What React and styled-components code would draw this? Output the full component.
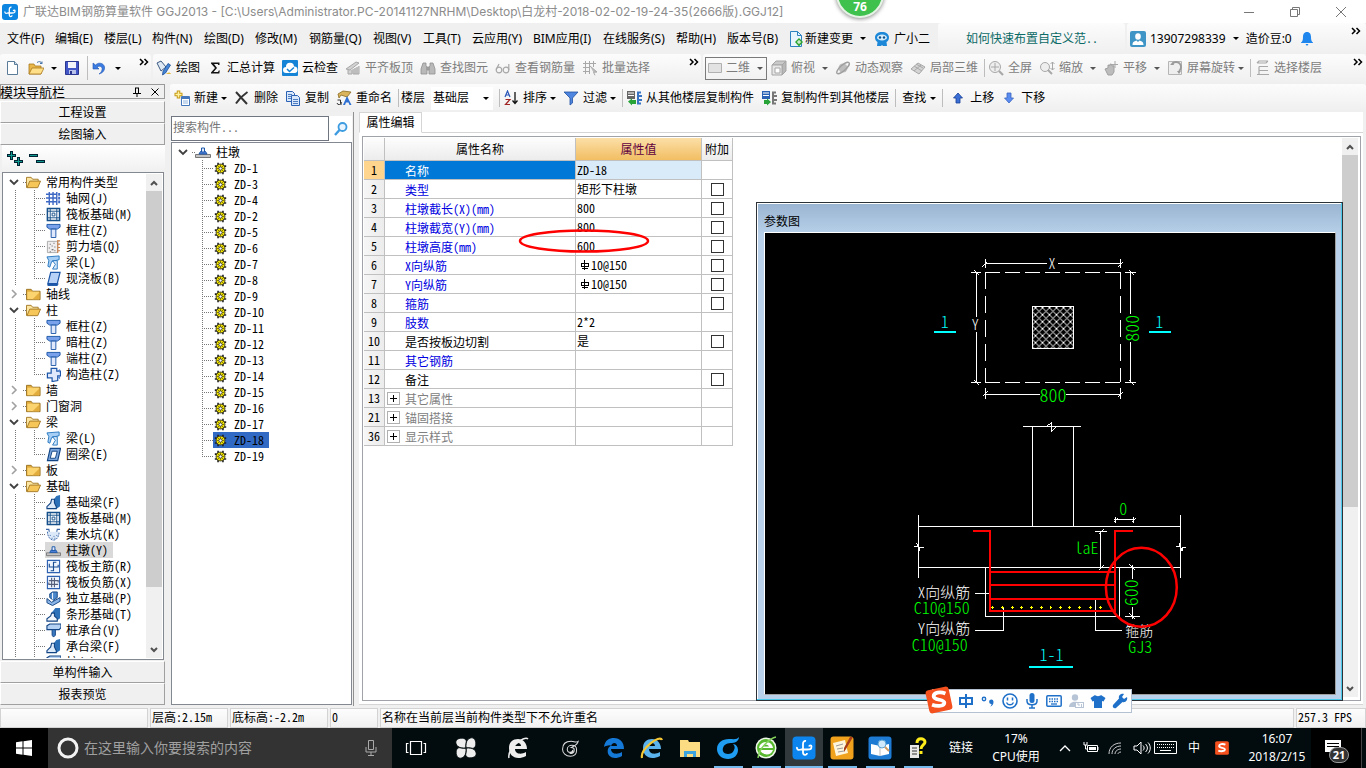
import React from 'react';
import styled, { createGlobalStyle, css } from 'styled-components';

const UI = '"Noto Sans", "Noto Sans CJK SC", sans-serif';
const SONG = '"Noto Sans CJK SC", "Noto Sans", sans-serif';

const Global = createGlobalStyle`
  *, *::before, *::after { box-sizing: border-box; }
  html, body { margin: 0; padding: 0; }
  body { font: 12px/16px ${UI}; color: #000; background: #f0f0f0; }
  button, input, select { font: inherit; color: inherit; margin: 0; padding: 0; border: 0; background: none; border-radius: 0; }
  ul { list-style: none; margin: 0; padding: 0; }
  h1, h2 { font: inherit; margin: 0; }
`;

const song = css`
  font-family: ${SONG};
  font-feature-settings: "hwid";
`;

/* ---------- icon drawings ---------- */

const G = '#a8a8a8';
const B = '#1c56a8';

const drawings = {
  newFile: <><path d="M3.500 1.500h7l3 3v10h-10z" fill="#fff" stroke="#5b7c99" /><path d="M10.500 1.500v3h3" fill="#cfe0ee" stroke="#5b7c99" /></>,
  open: <><path d="M1 14V4h5l1 2h6v8z" fill="#e9b64a" stroke="#a87a1e" strokeWidth=".8" /><path d="M1 14l3-6h12l-3 6z" fill="#ffdf88" stroke="#a87a1e" strokeWidth=".8" /><path d="M9 2.500c2-1.500 4-1 5 1m0-2v2h-2" fill="none" stroke="#4674a8" /></>,
  save: <><path d="M1.500 1.500h13v13h-13z" fill="#4256c8" stroke="#2b3690" /><path d="M4 2h8v6H4z" fill="#f3f5fb" /><path d="M5 10h7v4H5z" fill="#b9c3ea" /><path d="M6 11h2v3H6z" fill="#2b3690" /></>,
  undo: <path d="M2 3v6h6L6 7c3-2 6 0 5 3-.4 1.600-1.500 3-3 4 4-1 6-4 5.500-7C13 3.500 8 1.500 4.500 5z" fill="#3c7be0" stroke="#1e56b5" strokeWidth=".6" />,
  draw: <><path d="M1 3l4-2 5 6-5 4z" fill="#dfe9f4" stroke="#3b5a80" /><path d="M14.500 5l-5 8-3 2 .5-3.500 5-8z" fill="#4585d8" stroke="#1c4e93" strokeWidth=".8" /><path d="M10 14c2-2 4-2 5 0z" fill="#e5b93c" /></>,
  sigma: <path d="M4 2.500h8.500v2.500h-1.200l-.6-1H7l3 4-3.500 4h4.500l.8-1.500h1l-.5 3H4v-1l4-4.500-4-4.500z" fill="#111" />,
  cloud: <><rect width="16" height="16" rx="1" fill="#1583d6" /><path d="M4 13a3 3 0 010-6 4 4 0 018-.5A3.200 3.200 0 0112.500 13z" fill="#fff" /><path d="M5 9l2.500 2.500L12 7.500" fill="none" stroke="#1583d6" strokeWidth="1.500" /></>,
  alignTop: <g fill="#d2d2d2" stroke={G}><path d="M1 9l10-7 3 1-9 7zM3 10v4h4v-4M8 9v5h6V6" /><path d="M10 8v6M12 7v7" /></g>,
  binoc: <g fill="#b9b9b9" stroke="#8f8f8f" strokeWidth=".8"><path d="M3 3h3v3l1 1v7H1V9zM10 3h3l2 6v5H9V7l1-1zM7 7h2v3H7z" /></g>,
  glasses: <g fill="none" stroke={G} strokeWidth="1.200"><circle cx="4" cy="10" r="2.800" /><circle cx="11" cy="10" r="2.800" /><path d="M1.200 9.500L4 4M13.800 10V4" /></g>,
  batch: <g fill="none" stroke={G}><path d="M1 3.500h13M1 7.500h7M1 11.500h7M3.500 1v13M7.500 1v13M11.500 1v6" /><path d="M8 6l7 6-3.500.3 1.500 3" fill="#bbb" /></g>,
  flat: <path d="M1.500 3.500h13v9h-13z" fill="#e2e2e2" stroke="#b0b0b0" />,
  cube: <g stroke="#a5a5a5" fill="#e6e6e6"><path d="M1 5l4-4h10l-4 4z" fill="#c9c9c9" /><path d="M15 1v10l-4 4V5z" fill="#b8b8b8" /><path d="M1 5h10v10H1z" /><path d="M4 8h5v5H4z" fill="#fff" /></g>,
  orbit: <><circle cx="8" cy="8" r="4.500" fill="#bdbdbd" /><ellipse cx="8" cy="8" rx="8" ry="2.800" fill="none" stroke="#9f9f9f" strokeWidth="1.400" transform="rotate(-42 8 8)" /></>,
  local3d: <g fill="#d4d4d4" stroke={G}><path d="M1 9l7-6 7 4-6 7z" /><path d="M4 6l8 5M6 4l7 4M11 5l-7 6" /></g>,
  full: <g fill="none" stroke={G}><circle cx="7" cy="7" r="5.500" fill="#eee" /><path d="M7 3v8M3 7h8" /><path d="M11 11l4 4" strokeWidth="2.200" /></g>,
  zoomer: <g fill="none" stroke={G}><circle cx="6" cy="7" r="4.500" fill="#eee" /><path d="M9 10l4 4" strokeWidth="2" /><path d="M13.500 2v8M11.500 4l2-2 2 2M11.500 8l2 2 2-2" /></g>,
  hand: <><path d="M2 9l3-1V5l2 .5V4l2 .5V6l2-.2V12l-2 3H5z" fill="#bcbcbc" stroke="#a0a0a0" /><path d="M12 1v7M9 4.500h6" stroke={G} /></>,
  rotate: <><path d="M1.500 1.500h13v13h-13z" fill="#eee" stroke="#b5b5b5" /><path d="M5 4a5 5 0 117 7" fill="none" stroke="#9a9a9a" strokeWidth="1.800" /><path d="M3 5l4 0-1-3zM14 11l-4 0 2 3z" fill="#999" /></>,
  floor: <g stroke={G} fill="none"><path d="M3 3l2-2h9M3 3h9l2-2M5 6.500h9M5 10.500h9M3 14.500h12M5 6.500v8" strokeWidth="1.200" /></g>,
  create: <><path d="M4.500 0.500v8M.5 4.500h8" stroke="#c79a17" strokeWidth="3.500" /><path d="M4.500 1.500v6M1.500 4.500h6" stroke="#fff2a0" strokeWidth="1.500" /><path d="M7.500 6.500h8v9h-8z" fill="#fff" stroke="#4476bb" /><path d="M8 7h7v2H8z" fill="#4476bb" /><path d="M9 11h5M9 13h5" stroke="#8fb3df" /></>,
  del: <path d="M2 2l11 12M13.500 2C9 5 5 9 2 13.500" stroke="#333" strokeWidth="2" fill="none" />,
  copy: <g stroke="#2c62b4" fill="#d8e7fa"><path d="M1.500 1.500h6l2 2v8h-8z" /><path d="M3 4.500h4M3 6.500h3M3 8.500h3" strokeWidth=".8" /><path d="M6.500 5.500h6l2 2v8h-8z" /><path d="M8 9.500h5M8 11.500h5M8 13.500h5" strokeWidth=".8" /></g>,
  rename: <><path d="M2 4l5-3 8 1-4 5-6-2-2 3z" fill="#d9b45c" stroke="#8a6a20" strokeWidth=".8" /><path d="M7 15l4-9 4.500 9h-2l-1-2.500h-2.500l-1 2.500z" fill="#2d6fd2" /><path d="M1 13a2 2 0 104-1v3M1.500 10h3v3" stroke="#333" fill="none" /></>,
  sort: <><path d="M2 7l2.500-6L7 7M3 5h3" stroke="#2855b8" fill="none" strokeWidth="1.200" /><path d="M2.500 9.500H7l-4.500 5H7" stroke="#a02525" fill="none" strokeWidth="1.200" /><path d="M12 2v11M9.500 10.500l2.500 3 2.500-3" stroke="#111" fill="none" strokeWidth="1.300" /></>,
  filter: <path d="M1 2h14l-5.500 6v5L7 15V8z" fill="#4d85e0" stroke="#23529f" strokeWidth=".8" />,
  fromFloor: <><path d="M1 1h8v8H1z" fill="#666" /><path d="M2 3h6M2 5.500h6" stroke="#fff" /><path d="M15 2.500h-3v11h3M12 6h4M12 10h4" stroke="#3973c4" fill="none" strokeWidth="2" /><path d="M2 11.500l4-3V10h4v4H6v1.500z" fill="#27a338" /></>,
  toFloor: <><path d="M1 1h8v8H1z" fill="#2c62b4" /><path d="M2 3h6M2 5.500h6" stroke="#fff" /><path d="M15 2.500h-3v11h3M12 6h4M12 10h4" stroke="#777" fill="none" strokeWidth="2" /><path d="M10 12L6 8.500V10H3v4h3v1.500z" fill="#27a338" /></>,
  up: <path d="M8 3l4.500 5H10v5H6V8H3.500z" fill="#3b6fd6" stroke="#173f95" strokeWidth=".8" />,
  down: <path d="M8 13l4.500-5H10V3H6v5H3.500z" fill="#5b8cf0" stroke="#3a66c0" strokeWidth=".8" />,
  change: <><path d="M2.500.5h7l4 4v11h-11z" fill="#e9f4fd" stroke="#2f82c0" /><path d="M9.500.5v4h4" fill="none" stroke="#2f82c0" /><path d="M11 7l4 4-4 4.500L7 11z" fill="#2fa52f" /><path d="M11 9v4M9 11h4" stroke="#fff" /></>,
  robot: <><path d="M8 1c4 0 7 2 7 5.500 0 2-1 3.500-2.500 4.500l.5 4H9l-1-1-1 1H3l.5-4C2 10 1 8.500 1 6.500 1 3 4 1 8 1z" fill="#1d88d8" /><ellipse cx="8" cy="6.500" rx="5" ry="3" fill="#d5ecfb" /><circle cx="6" cy="6.500" r="1.200" fill="#12548b" /><circle cx="10" cy="6.500" r="1.200" fill="#12548b" /></>,
  user: <><rect width="16" height="16" rx="2" fill="#3f95c6" /><ellipse cx="8" cy="5.500" rx="2.800" ry="3.300" fill="#fff" /><path d="M2.500 14c0-4 2.500-3.500 4-4.500L8 11l1.500-1.500c1.500 1 4 .5 4 4.500z" fill="#fff" /></>,
  bell: <path d="M8 1c3 0 4 2.500 4 5 0 3 .5 4.500 2 5.500v.5H2v-.5C3.500 10.500 4 9 4 6c0-2.500 1-5 4-5zM6.500 13h3L8 15z" fill="#1f86ee" />,
  find: <><circle cx="9.500" cy="6" r="4" fill="#e8f4ff" stroke="#3d9be0" strokeWidth="1.800" /><path d="M6.500 9L2 14" stroke="#3d9be0" strokeWidth="2.400" /></>,
  app: <><rect width="16" height="16" rx="3" fill="#0c86e0" /><path d="M9.500 3.200C8 3 7.300 4 7.300 5.500V11c0 2 2.700 2 2.700.3M3 7.500c-.4 2 1 2.200 2.700 1.500H10c2 0 3 0 3-2 0-1-1.400-1-1.700 0" fill="none" stroke="#fff" strokeWidth="1.300" /></>,
  folder: <><path d="M.5 13.500v-11h5l1.500 2h8v9z" fill="#e3ad3e" stroke="#9a7322" /><path d="M1.500 5h12.500v8H1.500z" fill="#fbd36f" /><path d="M7 13l7-7v7z" fill="#e3ad3e" /></>,
  folderOpen: <><path d="M.5 13.500v-11h5l1.500 2h6v3" fill="#fce6a2" stroke="#a37a28" /><path d="M1 13.500l3-7h11.500l-3 7z" fill="#f6c659" stroke="#a37a28" /></>,
  grid: <><path d="M0 3.500h11M0 7.500h11M0 11.500h11M3.500 1v14M7.500 1v14M11.500 1v14" stroke="#3d68c4" strokeWidth="1.500" /><path d="M13 2h2v3h-2zM13 6h2v3h-2zM13 10h2v3h-2z" fill="#3d68c4" /></>,
  raft: <g fill="none" stroke="#16508a"><path d="M1.500 1.500h13v13h-13z" strokeWidth="1.600" /><path d="M4.500 1v14M11.500 1v14M1 4.500h14M1 11.500h14" /><path d="M6.500 6.500h3v3h-3z" /></g>,
  column: <><path d="M1 1.500h14v3l-3 2H4L1 4.500z" fill="#7aa2ea" stroke={B} /><path d="M5.500 6.500h5v9h-5z" fill="#dfe9fb" stroke={B} /></>,
  wall: <><path d="M1.500 2.500h11v12h-11z" fill="#f0eeee" stroke="#aaa" /><path d="M4 5h1v1H4zM8 4h1v1H8zM6 7h1v1H6zM3 9h1v1H3zM9 8h1v1H9zM6 11h2v1H6zM4 13h1v1H4zM9 12h1v1H9z" fill="#555" /><path d="M12.500 1v14M12 2h3M12 5.500h3M12 9h3M12 12.500h3" stroke="#c8834e" strokeWidth="1.200" /></>,
  beam: <><path d="M1 2l13-1v4l-8 2-2 6-2-1 1-6z" fill="#a7cff6" stroke="#2877bf" /><path d="M7 6l5 0v9H7l3-5z" fill="#d6e9fb" stroke="#2877bf" /></>,
  slab: <><path d="M5 1.500h10l-3 12H2z" fill="#b8d2f7" stroke={B} strokeWidth="1.300" /><path d="M2 13.500v2h10l1-2" fill={B} stroke={B} /></>,
  ring: <><path d="M4.500 1.500h11l-3 13h-11z" fill="#7aa5dd" stroke="#134483" strokeWidth="1.200" /><path d="M6.500 4.500h5.500l-2 7.500H4.500z" fill="#fff" stroke="#134483" /></>,
  tooth: <><path d="M5.500 1.500h6v3h4v5h-3v5l-6 1v-4h-5v-5h4z" fill="#dfe9fb" stroke={B} strokeWidth="1.300" /><path d="M12 4l3-2v4zM12 11l3-2v4z" fill="#5887cf" /></>,
  foundBeam: <><path d="M8 5l3-4 4-1v12l-4 3z" fill="#2d71b8" /><path d="M1 14.500v-2l4-4 1-4h3v4l2 4v2z" fill="#dce9f8" stroke="#134483" strokeWidth="1.200" /></>,
  pit: <g fill="none" stroke="#3d68a8"><path d="M0 2.500h3l1 5h7l1-5h3" strokeWidth="1.200" /><path d="M1.500 5c0 5 3 9 6.500 9s6-4 6-9" fill="#dce9f8" strokeDasharray="2 1" /><path d="M4 9h1M8 10h1M11 9h1M6 12h1M9 12h1" /></g>,
  pier: <><path d="M.5 10.500h15v3H.5z" fill="#c4c4c4" stroke="#777" /><path d="M4 10l1.500-2.500h5L12 10z" fill="#4f82dc" stroke={B} /><path d="M6.500 4h3v4h-3z" fill="#dfe9fb" stroke={B} /></>,
  mainBar: <g fill="none" stroke="#2e62b0"><path d="M1.500 1.500h13v13h-13z" fill="#edf4fd" strokeWidth="1.200" /><path d="M8 3v10M8 3.500h3M8 12.500H5M3.500 5v3.500H13V6" stroke="#174b91" strokeWidth="1.200" /></g>,
  negBar: <g fill="none" stroke="#2e62b0"><path d="M1.500 1.500h13v13h-13z" fill="#edf4fd" strokeWidth="1.200" /><path d="M6 3v10M9 3v10M3 6h10v2M3 8v2h10" stroke="#555f7a" strokeWidth="1.200" /></g>,
  indep: <><path d="M1 8l5 4 9-5v4l-8 4.500-6-3z" fill="#8bb5e6" stroke="#134483" /><path d="M4 3l3-2h5v6l-4 3-4-3z" fill="#4b87cb" stroke="#134483" /><path d="M7 2v7" stroke="#fff" /></>,
  strip: <><path d="M6 6l4-5h5v11l-4 3z" fill="#2d71b8" /><path d="M1 15v-2.500l4-3 1-3h3v3l3 3V15z" fill="#f2f7fd" stroke="#134483" strokeWidth="1.200" /></>,
  pile: <><path d="M1 3l3-2h12v4l-2 2H1z" fill="#b5d1f3" stroke="#134483" strokeWidth="1.200" /><path d="M6.500 7h3.500v6l-2 2-1.500-2z" fill="#3a78c0" stroke="#134483" /></>,
  gear: <><path d="M5 1v14M11 1v14M1 5h14M1 11h14" stroke="#222" strokeWidth="2" /><circle cx="8" cy="8" r="5.500" fill="#f3e600" stroke="#222" /><path d="M8 3v10M3 8h10M4.500 4.500l7 7M11.500 4.500l-7 7" stroke="#4b4600" strokeWidth=".8" /><circle cx="8" cy="8" r="2" fill="#fff" stroke="#333" /></>,
};

const Svg = styled.svg`
  flex: none;
  display: block;
  width: ${p => p.$s || 16}px;
  height: ${p => p.$s || 16}px;
`;
const Icon = ({ name, size }) => <Svg viewBox="0 0 16 16" $s={size} aria-hidden="true">{drawings[name]}</Svg>;

/* ---------- page ---------- */

const Page = styled.div`
  display: flex;
  flex-direction: column;
  min-height: 100vh;
  position: relative;
  overflow: hidden;
`;

const TitleBar = styled.header`
  display: flex;
  align-items: center;
  height: 23px;
  padding: 0 2px;
  background: #fff;
  color: #8c8c8c;
  h1 { flex: 1; margin-left: 5px; font-family: Inter, "Noto Sans CJK SC", sans-serif; white-space: nowrap; }
`;
const WinButton = styled.button`
  width: 46px;
  height: 23px;
  display: grid;
  place-items: center;
`;
const Bubble = styled.div`
  position: absolute;
  top: -30px;
  left: 836px;
  width: 48px;
  height: 48px;
  padding-top: 27px;
  border-radius: 50%;
  border: 2px solid #e4f3e4;
  background: #3fc14e;
  box-shadow: 0 1px 4px #888;
  color: #fff;
  font-weight: 700;
  text-align: center;
`;

const Row = styled.div`
  display: flex;
  height: ${p => p.$h}px;
  gap: 2px;
`;
const barFill = css`
  background: linear-gradient(#fcfcfc, #efefef);
  border-radius: 3px;
`;
const MenuBar = styled.nav`
  display: flex;
  align-items: center;
  width: 936px;
  padding-left: 7px;
  white-space: nowrap;
`;
const MenuItem = styled.button`
  flex: none;
  display: flex;
  align-items: center;
  gap: 1px;
  width: ${p => p.$w}px;
  text-align: left;
  white-space: nowrap;
`;
const Tip = styled.a`
  ${barFill}
  ${song}
  width: 187px;
  padding: 7px 0 0 28px;
  color: #0b6a66;
  text-decoration: none;
  white-space: nowrap;
`;
const Account = styled.div`
  ${barFill}
  flex: 1;
  display: flex;
  align-items: center;
  gap: 4px;
  padding: 0 3px;
  white-space: nowrap;
`;

const Group = styled.div`
  ${barFill}
  display: flex;
  align-items: center;
  gap: 6px;
  padding: ${p => p.$pad || '0 2px'};
  ${p => (p.$w ? `width: ${p.$w}px;` : 'flex: 1;')}
  min-width: 0;
`;
const Tool = styled.button`
  flex: none;
  display: flex;
  align-items: center;
  gap: 3px;
  height: 24px;
  color: ${p => (p.$off ? '#7d7d7d' : '#000')};
  white-space: nowrap;
  > svg:first-child { margin: 0 1px; }
`;
const Divider = styled.i`
  flex: none;
  width: 1px;
  height: ${p => p.$h || 18}px;
  margin-right: ${p => (p.$wide ? 0 : -4)}px;
  background: #bdbdbd;
`;
const MoreMark = styled.button`
  margin-left: auto;
  align-self: flex-start;
  margin-top: 2px;
  width: 12px;
  height: 12px;
`;
const Caret = styled.i`
  flex: none;
  width: 0;
  margin: 0 0 0 ${p => p.$m ?? 6}px;
  border: 3px solid transparent;
  border-top-color: ${p => (p.$off ? '#555' : '#000')};
  border-bottom: 0;
`;
const MoreSvg = styled.svg`
  display: block;
`;
const More = () => (
  <MoreMark aria-label="更多">
    <MoreSvg width="10" height="8" viewBox="0 0 10 8"><path d="M1 1l3 3-3 3M5.500 1l3 3-3 3" fill="none" stroke="#000" strokeWidth="1.500" /></MoreSvg>
  </MoreMark>
);
const Combo = styled.label`
  flex: none;
  display: flex;
  align-items: center;
  width: 62px;
  height: 23px;
  margin-right: ${p => (p.$line ? -3 : 0)}px;
  padding: 0 1px;
  border: 1px solid ${p => (p.$line ? '#7a7a7a' : '#fff')};
  background: ${p => (p.$line ? 'transparent' : '#fff')};
  color: ${p => (p.$line ? '#7d7d7d' : '#000')};
  select { appearance: none; flex: 1; min-width: 0; outline: 0; margin-left: ${p => (p.$line ? 3 : 0)}px; }
  ${Caret} { margin: 0 2px 0 3px; }
`;

const Body = styled.main`
  flex: 1;
  display: flex;
  min-height: 0;
  gap: 5px;
`;

/* ---------- module navigator ---------- */

const Nav = styled.aside`
  ${song}
  width: 165px;
  display: flex;
  flex-direction: column;
  padding-bottom: 1px;
`;
const NavTitle = styled.div`
  display: flex;
  align-items: center;
  height: 15px;
  margin-bottom: 1px;
  border: 1px solid #9a9a9a;
  h2 { flex: 1; font-size: 13px; line-height: 12px; margin-left: -1px; white-space: nowrap; }
  button { width: 18px; height: 13px; display: grid; place-items: center; }
`;
const NavButton = styled.button`
  flex: none;
  height: 22px;
  margin-top: ${p => (p.$gap ? 1 : 0)}px;
  border: 1px solid #fff;
  border-right-color: #a0a0a0;
  border-bottom: 1px solid #a0a0a0;
  background: #f0f0f0;
  text-align: center;
`;
const NavTools = styled.div`
  display: flex;
  align-items: center;
  gap: 6px;
  height: 27px;
  padding: 0 5px;
  margin: 0 0 0 2px;
  background: linear-gradient(#fff, #f0f0f0);
  button { display: block; height: 16px; }
`;
const TreeBox = styled.div`
  flex: 1 1 0;
  display: flex;
  min-height: 0;
  overflow: hidden;
  margin: 0 1px 0 ${p => (p.$nav ? 2 : 0)}px;
  padding: 1px;
  border: 1px solid #848890;
  background: #fff;
  > ul { flex: 1; height: 100%; overflow: hidden; min-width: 0; }
`;
const TreeRow = styled.li`
  display: flex;
  align-items: center;
  height: 16px;
  padding-left: ${p => p.$pad || 0}px;
  white-space: nowrap;
`;
const dots = (dir, size) => `repeating-linear-gradient(${dir}, #777 0 1px, transparent 1px 2px) ${size}`;
const Twist = styled.button`
  flex: none;
  width: 18px;
  height: 16px;
  display: grid;
  place-items: center;
`;
const Stub = styled.i`
  flex: none;
  width: 3px;
  height: 1px;
  background: ${dots('to right', '0 0')};
`;
const Trunk = styled.i`
  flex: none;
  width: 19px;
  height: 16px;
  background: ${dots('to bottom', '0 0 / 1px 100% no-repeat')};
`;
const Elbow = styled.i`
  flex: none;
  width: 11px;
  height: 16px;
  background:
    ${p => dots('to bottom', `0 0 / 1px ${p.$last ? '50%' : '100%'} no-repeat`)},
    ${dots('to right', '0 8px / 100% 1px no-repeat')};
`;
const Leaf = styled.span`
  display: flex;
  align-items: center;
  gap: ${p => p.$gap || 5}px;
  height: 16px;
  padding: 0 5px 0 ${p => (p.$root ? 0 : 1)}px;
  background: ${p => p.$bg || 'none'};
`;
const Twisty = ({ open }) => (
  <Twist aria-label={open ? '收起' : '展开'}>
    <svg width="10" height="10" viewBox="0 0 10 10">
      {open
        ? <path d="M1 3l4 4 4-4" fill="none" stroke="#404040" strokeWidth="1.800" />
        : <path d="M3 1l4 4-4 4" fill="none" stroke="#a0a0a0" strokeWidth="1.600" />}
    </svg>
  </Twist>
);

const Scroll = styled.div`
  flex: none;
  display: flex;
  flex-direction: column;
  width: 16px;
  background: #f0f0f0;
  i { flex: ${p => p.$thumb} 1 0; background: #cdcdcd; }
  span { flex: ${p => 100 - p.$thumb} 1 0; }
  button { height: 17px; width: 16px; display: grid; place-items: center; }
`;
const Scrollbar = ({ thumb }) => (
  <Scroll $thumb={thumb}>
    <button aria-label="向上滚动"><svg width="8" height="6"><path d="M1 5l3-3 3 3" fill="none" stroke="#505050" strokeWidth="2" /></svg></button>
    <i /><span />
    <button aria-label="向下滚动"><svg width="8" height="6"><path d="M1 1l3 3 3-3" fill="none" stroke="#505050" strokeWidth="2" /></svg></button>
  </Scroll>
);

const modules = [
  ['常用构件类型', [['轴网(J)', 'grid'], ['筏板基础(M)', 'raft'], ['框柱(Z)', 'column'], ['剪力墙(Q)', 'wall'], ['梁(L)', 'beam'], ['现浇板(B)', 'slab']]],
  ['轴线'],
  ['柱', [['框柱(Z)', 'column'], ['暗柱(Z)', 'column'], ['端柱(Z)', 'column'], ['构造柱(Z)', 'tooth']]],
  ['墙'],
  ['门窗洞'],
  ['梁', [['梁(L)', 'beam'], ['圈梁(E)', 'ring']]],
  ['板'],
  ['基础', [['基础梁(F)', 'foundBeam'], ['筏板基础(M)', 'raft'], ['集水坑(K)', 'pit'], ['柱墩(Y)', 'pier'], ['筏板主筋(R)', 'mainBar'], ['筏板负筋(X)', 'negBar'], ['独立基础(P)', 'indep'], ['条形基础(T)', 'strip'], ['桩承台(V)', 'pile'], ['承台梁(F)', 'foundBeam'], ['桩(U)', 'pile']]],
];

const Navigator = () => (
  <Nav>
    <NavTitle>
      <h2>模块导航栏</h2>
      <button aria-label="固定"><svg width="8" height="10"><path d="M2 1h4M2.500 1v5M5.500 1v5M0 6.500h8M4 6v4" stroke="#000" fill="none" /></svg></button>
      <button aria-label="关闭"><svg width="8" height="8"><path d="M.5.5l7 7M7.500.5l-7 7" stroke="#000" /></svg></button>
    </NavTitle>
    <NavButton $gap>工程设置</NavButton>
    <NavButton>绘图输入</NavButton>
    <NavTools>
      <button aria-label="全部展开"><svg width="16" height="16"><path d="M4.500 0v9M0 4.500h9M11.500 6v9M7 10.500h9" stroke="#023" strokeWidth="3" /><path d="M4.500 1v7M1 4.500h7M11.500 7v7M8 10.500h7" stroke="#119a8e" /></svg></button>
      <button aria-label="全部收起"><svg width="16" height="16"><path d="M0 4.500h9M7 10.500h9" stroke="#023" strokeWidth="3" /><path d="M1 4.500h7M8 10.500h7" stroke="#119a8e" /></svg></button>
    </NavTools>
    <TreeBox $nav>
      <ul>
        {modules.map(([name, kids], i) => (
          <React.Fragment key={i}>
            <TreeRow $pad={1}>
              <Twisty open={!!kids} />
              <Stub />
              <Leaf $root><Icon name={kids ? 'folderOpen' : 'folder'} size={15} />{name}</Leaf>
            </TreeRow>
            {kids && kids.map(([label, icon], k) => (
              <TreeRow key={k} $pad={11}>
                <Trunk /><Elbow $last={k === kids.length - 1} />
                <Leaf $bg={label === '柱墩(Y)' && '#d9d9d9'}><Icon name={icon} size={15} />{label}</Leaf>
              </TreeRow>
            ))}
          </React.Fragment>
        ))}
      </ul>
      <Scrollbar thumb={88} />
    </TreeBox>
    <NavButton $gap>单构件输入</NavButton>
    <NavButton>报表预览</NavButton>
  </Nav>
);

/* ---------- component list ---------- */

const Work = styled.section`
  flex: 1;
  min-width: 0;
  display: flex;
  flex-direction: column;
`;
const Panes = styled.div`
  flex: 1;
  display: flex;
  min-height: 0;
  gap: 5px;
`;
const ListPane = styled.div`
  ${song}
  display: flex;
  flex-direction: column;
  width: 184px;
  padding: 4px 0 1px 1px;
  border-right: 1px solid #909090;
`;
const SearchRow = styled.div`
  display: flex;
  height: 26px;
  margin-right: 1px;
  background: #fff;
  input {
    width: 158px;
    height: 25px;
    padding: 0 1px 4px;
    border: 1px solid #707680;
    background: #fff;
    outline: 0;
  }
  input::placeholder { color: #777; opacity: 1; }
  button { flex: 1; display: grid; place-items: center; }
`;
const pieces = [1, 3, 4, 2, 5, 6, 7, 8, 9, 10, 11, 12, 13, 14, 15, 16, 17, 18, 19];

const ComponentList = () => (
  <ListPane>
    <SearchRow>
      <input aria-label="搜索构件" placeholder="搜索构件..." />
      <button aria-label="搜索"><Icon name="find" /></button>
    </SearchRow>
    <TreeBox>
      <ul>
        <TreeRow $pad={1}><Twisty open /><Stub /><Leaf $root><Icon name="pier" />柱墩</Leaf></TreeRow>
        {pieces.map(n => (
          <TreeRow key={n} $pad={29}>
            <Elbow $last={n === 19} />
            <Leaf $gap={7} $bg={n === 18 && '#316ac5'}><Icon name="gear" size={13} />ZD-{n}</Leaf>
          </TreeRow>
        ))}
      </ul>
    </TreeBox>
  </ListPane>
);

/* ---------- property editor ---------- */

const Editor = styled.div`
  ${song}
  flex: 1;
  min-width: 0;
  display: flex;
  flex-direction: column;
  margin-right: 3px;
  padding-bottom: 1px;
`;
const Tabs = styled.div`
  display: flex;
  height: 21px;
  background: #fff;
  border-bottom: 1px solid #d5d5d5;
  button { width: 63px; height: 21px; padding-bottom: 2px; border: 1px solid #d5d5d5; border-bottom-color: #fff; background: #fff; }
`;
const Sheet = styled.div`
  flex: 1;
  display: flex;
  padding: 3px 2px 3px 3px;
  background: #fff;
  border-bottom: 1px solid #d5d5d5;
`;
const SheetInner = styled.div`
  position: relative;
  flex: 1;
  display: flex;
  justify-content: space-between;
  align-items: stretch;
  padding: 1px 2px 3px 1px;
  border: 1px solid #a0a3a8;
`;
const Grid = styled.table`
  border-collapse: separate;
  border-spacing: 0;
  table-layout: fixed;
  width: 369px;
  align-self: flex-start;
  th, td { height: 19px; padding: 0; border: solid #c0c0c0; border-width: 0 1px 1px 0; font-weight: 400; line-height: 18px; white-space: nowrap; }
  thead th { height: 23px; background: linear-gradient(#fdfdfd, #ececec); }
  thead th:nth-child(3) { background: linear-gradient(#fbdfa8, #f2be62); color: #600040; }
  tbody th { background: linear-gradient(90deg, #f6f6f6, #ececec); text-align: center; }
  tbody tr:first-child th { background: #ffd58d; }
  td:nth-child(3) { padding-left: 1px; }
  td:nth-child(4) { text-align: center; }
  tbody tr:first-child td:nth-child(2) { background: #0078d7; color: #fff; }
  tbody tr:first-child td:nth-child(3) { background: #d9eaf9; }
`;
const Name = styled.div`
  display: flex;
  align-items: center;
  gap: 5px;
  height: 18px;
  padding: 1px 0 0 ${p => (p.$group ? 2 : 20)}px;
  color: ${p => p.$c};
`;
const Plus = styled.button`
  width: 13px;
  height: 13px;
  border: 1px solid #b0b0b0;
  background: linear-gradient(#000, #000) center / 7px 1px no-repeat, linear-gradient(#000, #000) center / 1px 7px no-repeat;
`;
const Check = styled.input`
  appearance: none;
  display: block;
  width: 13px;
  height: 13px;
  margin: 0 auto;
  border: 1px solid #333;
  background: #fff;
`;
const Value = styled.span`
  display: flex;
  align-items: center;
  gap: 1px;
  padding-left: ${p => (p.$bar ? 3 : 0)}px;
`;
const Steel = () => (
  <svg width="10" height="10" viewBox="0 0 10 10" role="img" aria-label="三级钢"><path d="M1 3.500h8M1 6.500h8M4.500 0v10M1.500 3v4M8.500 3v4M2 8.500h6" stroke="#000" fill="none" shapeRendering="crispEdges" /></svg>
);

const BLUE = '#0000e0';
const rows = [
  [1, '名称', '#fff', 'ZD-18', 0],
  [2, '类型', BLUE, '矩形下柱墩', 1],
  [3, '柱墩截长(X)(mm)', BLUE, '800', 1],
  [4, '柱墩截宽(Y)(mm)', BLUE, '800', 1],
  [5, '柱墩高度(mm)', BLUE, '600', 1],
  [6, 'X向纵筋', BLUE, '10@150', 1, 'bar'],
  [7, 'Y向纵筋', BLUE, '10@150', 1, 'bar'],
  [8, '箍筋', BLUE, '', 1],
  [9, '肢数', BLUE, '2*2', 0],
  [10, '是否按板边切割', '#000', '是', 1],
  [11, '其它钢筋', BLUE, '', 0],
  [12, '备注', '#000', '', 1],
  [13, '其它属性', '#808080', '', 0, 'group'],
  [21, '锚固搭接', '#808080', '', 0, 'group'],
  [36, '显示样式', '#808080', '', 0, 'group'],
];

const PropertyGrid = () => (
  <Grid>
    <colgroup><col width="21" /><col width="191" /><col width="126" /><col width="31" /></colgroup>
    <thead><tr><th /><th>属性名称</th><th>属性值</th><th>附加</th></tr></thead>
    <tbody>
      {rows.map(([n, name, color, value, tick, kind]) => (
        <tr key={n}>
          <th scope="row">{n}</th>
          <td><Name $c={color} $group={kind === 'group'}>{kind === 'group' && <Plus aria-label={`展开${name}`} />}{name}</Name></td>
          <td><Value $bar={kind === 'bar'}>{kind === 'bar' && <Steel />}{value}</Value></td>
          <td>{tick ? <Check type="checkbox" aria-label={`附加 ${name}`} /> : null}</td>
        </tr>
      ))}
    </tbody>
  </Grid>
);

const Mark = styled.svg`
  position: absolute;
  left: 155px;
  top: 91px;
  width: 132px;
  height: 26px;
  pointer-events: none;
`;

const ParamWindow = styled.section`
  position: absolute;
  top: 65px;
  right: 17px;
  bottom: -1px;
  left: 393px;
  display: flex;
  flex-direction: column;
  padding: 0 6px 5px 7px;
  border: 1px solid #2c3138;
  box-shadow: inset -1px -1px #4bc9ea, inset 1px 1px #fff;
  background: linear-gradient(#99b4d1, #b9d1ea 32px);
  h2 { flex: none; height: 29px; padding: 10px 0 0; line-height: 16px; }
`;
const Canvas = styled.svg`
  flex: 1;
  min-height: 0;
  width: 100%;
  display: block;
  background: #000;
  border: 1px solid #fff;
  border-right-color: #a0a0a0;
  border-bottom-color: #a0a0a0;
  font-family: ${SONG};
`;

const barDots = [992, 1002, 1012, 1021, 1031, 1041, 1051, 1061, 1070, 1080, 1091, 1101];

const Diagram = () => (
  <Canvas viewBox="765 234 571 460" preserveAspectRatio="xMidYMid meet" role="img" aria-label="柱墩参数图">
    <defs>
      <pattern id="hatch" width="7" height="7" patternUnits="userSpaceOnUse">
        <path d="M0 0l7 7M7 0L0 7" stroke="#fff" strokeWidth="1" />
      </pattern>
    </defs>
    <g fill="none" stroke="#fff" shapeRendering="crispEdges">
      <path d="M985.500 272.500H1121.500M985.500 382.500H1121.500" strokeDasharray="15 5" />
      <path d="M985.500 272.500V382.500M1121.500 272.500V382.500" strokeDasharray="17 7" />
      <rect x="1032.500" y="306.500" width="42" height="42" fill="url(#hatch)" />
      <path d="M985.500 263.500H1047M1059 263.500H1121.500M985.500 259v9M1121.500 259v9M985.500 394.500H1040M1067 394.500H1121.500M985.500 388v11M1121.500 388v11" />
      <path d="M976.500 272.500V317M976.500 332V382.500M971 272.500h10M971 382.500h10M1131.500 272.500V314M1131.500 342V382.500M1126 272.500h11M1126 382.500h11" />
      <path d="M983 267l5-5M1119 267l5-5M983 397l5-5M1119 397l5-5M974 270l5 5M974 380l5 5M1129 270l5 5M1129 380l5 5" />
      <path d="M1023 426.500h59M1032.500 426.500V527M1074.500 426.500V527M1046 427l6-5v10l5-5" />
      <path d="M918 527.500h264M918 568.500h264M918.500 516v63M1181.500 516v63M914 547h4l-1-3 3 8 0-4h4M1177 547h4l-1-3 3 8 0-4h4" />
      <path d="M985.500 568.500v49h135v-49" />
      <path d="M1101.500 532.500V568M1096 532.500h12M1099 535l5-5M1099 571l5-5M1115 520.500h20M1116.500 518v6M1134.500 518v6M1114 523l4-4M1132 523l4-4" />
      <path d="M1133.500 566V580M1133.500 608V620M1126 617.500h15M1130 565l6 6M1130 614l6 6" />
      <path d="M975 594.500h15M975 631.500h28.500V609M1096.500 601v30.500H1123" />
    </g>
    <g fill="none" stroke="#f00" strokeWidth="2" shapeRendering="crispEdges">
      <path d="M973 532h17v80h126v-80h18M990 573h126M990 586h126M990 600h126" />
    </g>
    <path d={barDots.map(x => `M${x - 1} 608.500h3M${x + 0.5} 607v3`).join('')} stroke="#ff0" shapeRendering="crispEdges" />
    <path d="M934 332h22M1150 332h22M1029 668h45" stroke="#0ff" strokeWidth="2" shapeRendering="crispEdges" />
    <g fill="#fff" fontSize="14" fontWeight="300" style={{ fontFeatureSettings: '"hwid"' }}>
      <text x="1049" y="269">X</text>
      <text x="972" y="330">Y</text>
      <text x="918" y="599" fontSize="15">X向纵筋</text>
      <text x="918" y="635" fontSize="15">Y向纵筋</text>
      <text x="1126" y="637">箍筋</text>
    </g>
    <g fill="#0f0" fontSize="16" fontWeight="300" style={{ fontFeatureSettings: '"hwid"' }}>
      <text x="1040" y="402" fontSize="18">800</text>
      <text fontSize="18" transform="translate(1140 342) rotate(-90)">800</text>
      <text fontSize="18" transform="translate(1139 607) rotate(-90)">600</text>
      <text x="1075" y="555">laE</text>
      <text x="1120" y="516">0</text>
      <text x="914" y="615">C10@150</text>
      <text x="912" y="652">C10@150</text>
      <text x="1129" y="654">GJ3</text>
    </g>
    <g fill="#0ff" fontSize="16" fontWeight="300" style={{ fontFeatureSettings: '"hwid"' }}>
      <text x="941" y="328">1</text>
      <text x="1156" y="328">1</text>
      <text x="1040" y="662">1-1</text>
    </g>
    <ellipse cx="1142" cy="588" rx="35.500" ry="39.500" fill="none" stroke="#f00" strokeWidth="2.500" />
  </Canvas>
);

/* ---------- status bar ---------- */

const Status = styled.footer`
  ${song}
  flex: none;
  display: flex;
  gap: 2px;
  height: 22px;
  padding: 2px 0 0;
  div {
    flex: none;
    height: 20px;
    padding: 0 1px;
    border: 1px solid #d3d3d3;
    background: linear-gradient(#fdfdfd, #f1f1f1);
    white-space: nowrap;
  }
`;
const Cell = styled.div`
  width: ${p => p.$w}px;
`;
const WideCell = styled.div`
  &&& { flex: 1; }
`;

/* ---------- input method bar ---------- */

const Ime = styled.div`
  position: absolute;
  right: 234px;
  bottom: 55px;
  display: flex;
  align-items: center;
  gap: 6px;
  height: 24px;
  padding: 0 3px 0 25px;
  border: 1px solid #b3c1d3;
  background: #fff;
  color: #1f70c8;
  button { width: 16px; height: 16px; display: block; }
`;
const ImeLogo = styled.svg`
  position: absolute;
  left: -9px;
  top: -5px;
  width: 30px;
  height: 30px;
`;
const imeIcons = [
  ['中文', <path d="M2 5h12v6H2zM8 1v14" fill="none" stroke="currentColor" strokeWidth="2" />],
  ['标点', <><circle cx="4" cy="6" r="1.700" fill="none" stroke="currentColor" strokeWidth="1.400" /><path d="M13.500 8.500a2.200 2.200 0 10-2 2.500c0 1-.5 2-1.500 2.500 2.500-.3 3.700-2.500 3.500-5z" fill="currentColor" /></>],
  ['表情', <><circle cx="8" cy="8" r="7" fill="none" stroke="currentColor" strokeWidth="1.600" /><path d="M5.500 4.500v3M10.500 4.500v3M4.500 9.500c1.500 3 5.500 3 7 0" fill="none" stroke="currentColor" strokeWidth="1.500" /></>],
  ['语音', <><rect x="5.500" y="0" width="5" height="10" rx="2.500" fill="currentColor" /><path d="M3 6v2c0 5 10 5 10 0V6M8 12v3M5 15h6" fill="none" stroke="currentColor" strokeWidth="1.500" /></>],
  ['软键盘', <><rect x=".8" y="2.800" width="14.400" height="10.400" rx="1" fill="none" stroke="currentColor" strokeWidth="1.500" /><path d="M3 6h10M3 8.500h10" stroke="currentColor" strokeWidth="1.500" strokeDasharray="1.500 1" /><path d="M5 11h6" stroke="currentColor" strokeWidth="1.300" /></>],
  ['登录', <><circle cx="7" cy="4.500" r="3.200" fill="#b7c4d6" /><path d="M1 14c0-7 12-7 12 0z" fill="#b7c4d6" /><rect x="7.500" y="9.500" width="8" height="5" fill="#fff" stroke="#b7c4d6" /><path d="M9 11h2v2M13.500 11v3" stroke="#b7c4d6" fill="none" /></>],
  ['皮肤', <path d="M5 2c1 1.500 5 1.500 6 0l4.500 3-2 3.500L12 8v7H4V8l-1.500.5-2-3.500z" fill="currentColor" />],
  ['工具', <path d="M15 4l-3 2-2-2 2-3c-3-1-6 1.500-5 4.500L1 12c-1 2 1 4 3 3l6.500-6C13.500 10 16 7 15 4z" fill="currentColor" />],
];

/* ---------- taskbar ---------- */

const Taskbar = styled.footer`
  flex: none;
  display: flex;
  height: 40px;
  background: #020b0e;
  color: #fff;
  white-space: nowrap;
`;
const Start = styled.button`
  width: 48px;
  display: grid;
  place-items: center;
  background: #000;
`;
const Cortana = styled.label`
  display: flex;
  align-items: center;
  gap: 5px;
  width: 344px;
  padding: 0 11px 0 9px;
  background: #333;
  input { flex: 1; min-width: 0; font-size: 14px; outline: 0; }
  input::placeholder { color: #a0a0a0; opacity: 1; }
`;
const TaskButton = styled.button`
  flex: none;
  width: ${p => p.$w || 38}px;
  display: grid;
  place-items: center;
  background:
    linear-gradient(#76b9ed, #76b9ed) center bottom / ${p => (p.$on ? 38 : p.$run ? 29 : 0)}px 2px no-repeat,
    ${p => (p.$on ? '#32393c' : 'transparent')};
`;
const Tray = styled.div`
  flex: 1;
  display: flex;
  align-items: center;
  min-width: 0;
`;
const TrayItem = styled.div`
  flex: none;
  display: grid;
  place-items: center;
  width: ${p => p.$w}px;
  line-height: 18px;
  text-align: center;
`;
const Notice = styled.div`
  position: relative;
  margin-left: auto;
  width: 55px;
  height: 40px;
  padding: 12px 0 0 14px;
  background: #000;
  box-shadow: inset -4px 0 #020b0e, inset -5px 0 #444;
  span {
    position: absolute;
    left: 18px;
    top: 19px;
    width: 20px;
    height: 16px;
    border: 1px solid #999;
    border-radius: 8px;
    background: #333;
    font: 700 11px/14px ${UI};
    text-align: center;
  }
`;

const Task = ({ label, children, ...p }) => (
  <TaskButton aria-label={label} {...p}><Svg viewBox="0 0 24 24" $s={24}>{children}</Svg></TaskButton>
);
const eShape = 'M3 12c0-6 4-9 9-9 5 0 9 4 9 10H9c0 5 6 6 11 3v4C10 25 3 20 3 12zM9 10h6c0-4-6-4-6 0z';
const swirl = 'M22 3c-3 2-5 0-9 0C6 3 2 7 2 13c0 5 4 9 10 9 5 0 8-3 8-8 0-4-3-6-6-6s-6 2-6 5 2 4 4 4 3-1 3-3c1 2-1 5-4 4 4 2 6-1 6-4 0-2-2-3-4-3 3-2 8-3 9-8z';

const menus = [['文件(F)', 48], ['编辑(E)', 49], ['楼层(L)', 48], ['构件(N)', 52], ['绘图(D)', 51], ['修改(M)', 54], ['钢筋量(Q)', 64], ['视图(V)', 50], ['工具(T)', 49], ['云应用(Y)', 61], ['BIM应用(I)', 70], ['在线服务(S)', 73], ['帮助(H)', 51], ['版本号(B)', 61]];

export default function App() {
  return (
    <Page>
      <Global />
      <TitleBar>
        <Icon name="app" />
        <h1>广联达BIM钢筋算量软件 GGJ2013 - [C:\Users\Administrator.PC-20141127NRHM\Desktop\白龙村-2018-02-02-19-24-35(2666版).GGJ12]</h1>
        <WinButton aria-label="最小化"><svg width="10" height="10"><path d="M0 5.500h10" stroke="#777" /></svg></WinButton>
        <WinButton aria-label="还原"><svg width="10" height="10"><path d="M.5 2.500h7v7h-7zM2.500 2.500v-2h7v7h-2" fill="none" stroke="#777" /></svg></WinButton>
        <WinButton aria-label="关闭"><svg width="10" height="10"><path d="M0 0l10 10M10 0L0 10" stroke="#777" /></svg></WinButton>
      </TitleBar>
      <Bubble>76</Bubble>

      <Row $h={31}>
        <MenuBar>
          {menus.map(([t, w]) => <MenuItem key={t} $w={w}>{t}</MenuItem>)}
          <MenuItem $w={86}><Icon name="change" />新建变更<Caret /></MenuItem>
          <MenuItem $w={60}><Icon name="robot" />&nbsp;广小二</MenuItem>
        </MenuBar>
        <Tip href="#">如何快速布置自定义范..</Tip>
        <Account>
          <Icon name="user" />13907298339<Caret $m={3} />&nbsp;造价豆:0&nbsp;<Icon name="bell" />
          <More />
        </Account>
      </Row>

      <Row $h={30}>
        <Group $w={151} $pad="0 0 2px 3px">
          <Tool aria-label="新建工程"><Icon name="newFile" /></Tool>
          <Tool aria-label="打开"><Icon name="open" /><Caret $m={3} /></Tool>
          <Tool aria-label="保存"><Icon name="save" /></Tool>
          <Divider $h={24} />
          <Tool aria-label="撤销"><Icon name="undo" /><Caret $m={4} /></Tool>
          <More />
        </Group>
        <Group $w={548} $pad="0 0 2px 2px">
          <Tool><Icon name="draw" />绘图</Tool>
          <Tool><Icon name="sigma" />汇总计算</Tool>
          <Tool><Icon name="cloud" />云检查</Tool>
          <Tool $off><Icon name="alignTop" />平齐板顶</Tool>
          <Tool $off><Icon name="binoc" />查找图元</Tool>
          <Tool $off><Icon name="glasses" />查看钢筋量</Tool>
          <Tool $off><Icon name="batch" />批量选择</Tool>
          <More />
        </Group>
        <Group $pad="0 1px 2px 2px">
          <Combo $line><Icon name="flat" /><select aria-label="视图维度"><option>二维</option></select><Caret $off /></Combo>
          <Tool $off><Icon name="cube" />俯视<Caret $off $m={4} /></Tool>
          <Tool $off><Icon name="orbit" />动态观察</Tool>
          <Tool $off><Icon name="local3d" />局部三维</Tool>
          <Divider />
          <Tool $off><Icon name="full" />全屏</Tool>
          <Tool $off><Icon name="zoomer" />缩放<Caret $off $m={4} /></Tool>
          <Tool $off><Icon name="hand" />平移<Caret $off $m={4} /></Tool>
          <Tool $off><Icon name="rotate" />屏幕旋转<Caret $off $m={0} /></Tool>
          <Divider />
          <Tool $off><Icon name="floor" />选择楼层</Tool>
          <More />
        </Group>
      </Row>

      <Body>
        <Navigator />
        <Work>
          <Row $h={28}>
            <Group $pad="0 0 0 3px">
              <Tool><Icon name="create" />新建<Caret $m={0} /></Tool>
              <Tool><Icon name="del" />删除</Tool>
              <Tool><Icon name="copy" />复制</Tool>
              <Tool><Icon name="rename" />重命名</Tool>
              <Divider />
              <span>楼层</span>
              <Combo><select aria-label="楼层"><option>基础层</option></select><Caret /></Combo>
              <Divider />
              <Tool><Icon name="sort" />排序<Caret $m={0} /></Tool>
              <Tool><Icon name="filter" />过滤<Caret $m={0} /></Tool>
              <Divider />
              <Tool><Icon name="fromFloor" />从其他楼层复制构件</Tool>
              <Tool><Icon name="toFloor" />复制构件到其他楼层</Tool>
              <Divider $wide />
              <Tool>查找<Caret $m={1} /></Tool>
              <Divider $wide />
              <Tool><Icon name="up" />上移</Tool>
              <Tool><Icon name="down" />下移</Tool>
            </Group>
          </Row>
          <Panes>
            <ComponentList />
            <Editor>
              <Tabs role="tablist"><button role="tab" aria-selected="true">属性编辑</button></Tabs>
              <Sheet>
                <SheetInner>
                  <PropertyGrid />
                  <Scrollbar thumb={67} />
                  <Mark viewBox="0 0 132 26"><ellipse cx="66" cy="13" rx="64" ry="10.500" fill="none" stroke="#f00" strokeWidth="2.500" /></Mark>
                  <ParamWindow>
                    <h2>参数图</h2>
                    <Diagram />
                  </ParamWindow>
                </SheetInner>
              </Sheet>
            </Editor>
          </Panes>
        </Work>
      </Body>

      <Status>
        <Cell $w={148} />
        <Cell $w={78}>层高:2.15m</Cell>
        <Cell $w={98}>底标高:-2.2m</Cell>
        <Cell $w={48}>0</Cell>
        <WideCell>名称在当前层当前构件类型下不允许重名</WideCell>
        <Cell $w={70}>257.3 FPS</Cell>
      </Status>

      <Ime>
        <ImeLogo viewBox="0 0 28 28"><rect x="3" y="3" width="22" height="22" rx="3" fill="#f4511e" transform="rotate(-12 14 14)" /><path d="M20 8c-5-2-11-1-11 2.500 0 4 10 2.500 10 6 0 3-6 4-11.500 2" fill="none" stroke="#fff" strokeWidth="3.500" /></ImeLogo>
        {imeIcons.map(([label, d]) => <button key={label} aria-label={label}><Svg viewBox="0 0 16 16">{d}</Svg></button>)}
      </Ime>

      <Taskbar>
        <Start aria-label="开始"><svg width="16" height="16" viewBox="0 0 16 16"><path d="M0 2.200l6.500-.9v6.200H0zM7.500 1.200L16 0v7.500H7.500zM0 8.500h6.500v6.200L0 13.800zM7.500 8.500H16V16l-8.500-1.200z" fill="#fff" /></svg></Start>
        <Cortana>
          <svg width="22" height="22"><circle cx="11" cy="11" r="9" fill="none" stroke="#f2f2f2" strokeWidth="3" /></svg>
          <input aria-label="搜索" placeholder="在这里输入你要搜索的内容" />
          <svg width="20" height="20" viewBox="0 0 20 20"><path d="M7.500 2.500h5v9h-5zM5 9v5h10V9M10 14v3M7 17.500h6" fill="none" stroke="#aaa" /></svg>
        </Cortana>
        <Task label="任务视图" $w={48}><path d="M6.500 5.500h11v13h-11zM4.500 7.500h-2v9h2M19.500 7.500h2v9h-2" fill="none" stroke="#fff" strokeWidth="1.200" /></Task>
        <Task label="四叶草" $w={52}><g fill="#eee" stroke="#020b0e" strokeWidth=".8"><path d="M12 12C5 13 1 9 2 5c1-3 8-4 10-1 1 2-1 5 0 8zM12 12c-1-7 3-11 7-10 3 1 4 8 1 10-2 1-5-1-8 0zM12 12c7-1 11 3 10 7-1 3-8 4-10 1-1-2 1-5 0-8zM12 12c1 7-3 11-7 10-3-1-4-8-1-10 2-1 5 1 8 0z" /></g></Task>
        <Task label="浏览器" $w={52}><path d={eShape} fill="#eee" /><path d="M22 3C18-1 1 13 3 22" fill="none" stroke="#eee" strokeWidth="1.500" /></Task>
        <Task label="广联达" $w={51}><path d={swirl} fill="none" stroke="#ddd" strokeWidth="1.300" transform="translate(3 3) scale(.78)" /></Task>
        <Task label="Edge"><path d="M2 11C3 4 7 2 12 2c6 0 10 4 10 11H9c0 5 6 6 11 3v4C11 25 4 20 6 13c.6-2 2-3 4-4-4 0-7 1-8 2zM9 10h6c0-4-5-4-6 0z" fill="#1579d8" /></Task>
        <Task label="Internet Explorer"><path d={eShape} fill="#5bb3ee" /><path d="M22 4C20-2 0 13 2 22" fill="none" stroke="#f3c736" strokeWidth="2.200" /></Task>
        <Task label="文件资源管理器"><path d="M2 4h8l1 2h11v15H2z" fill="#fbdc83" /><path d="M6 21v-6h12v6h-3v-3H9v3z" fill="#3da4e0" /></Task>
        <Task label="广联达服务" $run><path d="M23 1c-2 3-6 2-10 2C6 3 1 7 1 13c0 6 5 10 11 10 6 0 10-4 10-9 0-3-2-6-5-6 2 2 2 4 1 6-1 3-4 4-6 4-4 0-6-3-5-6 1-4 5-5 9-5s7-3 7-6z" fill="#1f9df2" /></Task>
        <Task label="360浏览器" $run><circle cx="12" cy="12" r="10.500" fill="#eef8e8" /><circle cx="12" cy="12" r="9" fill="#57b82f" /><path d="M5 12c1-8 13-8 14 0zM6 14h13c-2 6-10 6-13 0z" fill="#fff" /><path d="M9 10.500h6c-1-2.500-5-2.500-6 0z" fill="#57b82f" /><path d="M22 1C17 2 5 11 4 22" fill="none" stroke="#83d35a" strokeWidth="1.500" /></Task>
        <Task label="广联达钢筋算量" $run $on><rect x=".5" y=".5" width="23" height="23" rx="4" fill="#0c86ee" /><path d="M14 5c-2-.3-3 1-3 3v8.500c0 3 4 3 4 .5M5 11c-.6 3 1.500 3.300 4 2.500h6c3 0 4.500 0 4.500-3 0-1.500-2-1.500-2.500 0" fill="none" stroke="#fff" strokeWidth="1.800" /></Task>
        <Task label="便签" $run><rect x=".5" y=".5" width="23" height="23" rx="3" fill="#f0a21c" /><path d="M3 7l12-3 3 13-12 3z" fill="#fff5dc" /><path d="M6 10l7-2M7 13l6-1M8 16l6-1" stroke="#999" /><path d="M23 1l-7 12-2 3v-4l6-11z" fill="#a63c18" /></Task>
        <Task label="阅读" $run><rect x=".5" y=".5" width="23" height="23" rx="3" fill="#1d7bd4" /><path d="M3 8l9 2 9-2v10l-9 2-9-2z" fill="#fff" /><path d="M12 10v10" stroke="#bbb" /><circle cx="14" cy="8" r="4" fill="#cfe9fb" stroke="#5aa3d8" /><path d="M17 11l4 4" stroke="#cf9a63" strokeWidth="2" /></Task>
        <Task label="帮助" $run><path d="M4 9h9v13H4z" fill="#e8e8e8" /><path d="M6 12h5M6 15h5M6 18h5" stroke="#333" /><path d="M11 7c0-6 8-5 8-1 0 3-4 3-4 7M15 15v3" stroke="#ffec1a" strokeWidth="3" fill="none" /></Task>
        <Tray>
          <TrayItem $w={48}>链接</TrayItem>
          <TrayItem $w={62}>17%<br />CPU使用</TrayItem>
          <TrayItem $w={36}><svg width="12" height="8"><path d="M1 7l5-5 5 5" fill="none" stroke="#fff" strokeWidth="1.300" /></svg></TrayItem>
          <TrayItem $w={14}><svg width="16" height="14"><path d="M4.500 4.500h10v6h-10zM15 6v3M1 1v3h3V1M2.500 4v4h2" fill="none" stroke="#fff" /><path d="M6 6h7v3H6z" fill="#fff" /></svg></TrayItem>
          <TrayItem $w={36}><svg width="14" height="14"><path d="M1 13C1 6 6 2 13 2M4 13c0-5 4-8 9-8M7 13c0-3 3-5 6-5M10 13c0-1 1-2 3-2" fill="none" stroke="#ccc" /></svg></TrayItem>
          <TrayItem $w={10}><svg width="18" height="14"><path d="M1 5h3l4-4v12L4 9H1zM10 4.500c1.500 1.500 1.500 3.500 0 5M12.500 3c2.500 2.500 2.500 5.500 0 8M15 1.500c3 3 3 8 0 11" fill="none" stroke="#fff" /></svg></TrayItem>
          <TrayItem $w={44}><svg width="23" height="14"><path d="M.5.5h22v12H.5z" fill="none" stroke="#fff" /><path d="M3 3.500h17M3 6.500h17" stroke="#fff" strokeDasharray="1 1" /><path d="M6 9.500h11" stroke="#fff" /></svg></TrayItem>
          <TrayItem $w={14}>中</TrayItem>
          <TrayItem $w={42}><svg width="16" height="16" viewBox="0 0 28 28"><rect x="2" y="2" width="24" height="24" rx="3" fill="#f4511e" /><path d="M20 8c-5-2-11-1-11 2.500 0 4 10 2.500 10 6 0 3-6 4-11.500 2" fill="none" stroke="#fff" strokeWidth="3.500" /></svg></TrayItem>
          <TrayItem $w={68}>16:07<br />2018/2/15</TrayItem>
          <Notice>
            <svg width="16" height="16"><path d="M0 0h16v12H8l-3 3v-3H0z" fill="#fff" /><path d="M2 3.500h12M2 6.500h12" stroke="#000" /></svg>
            <span>21</span>
          </Notice>
        </Tray>
      </Taskbar>
    </Page>
  );
}
